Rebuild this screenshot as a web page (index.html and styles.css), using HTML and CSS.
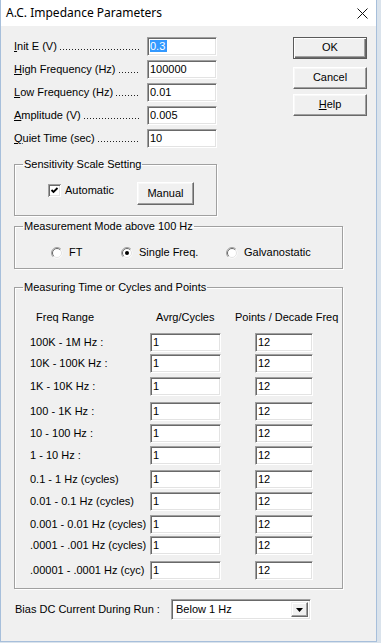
FILE: index.html
```html
<!DOCTYPE html>
<html>
<head>
<meta charset="utf-8">
<title>A.C. Impedance Parameters</title>
<link rel="stylesheet" href="styles.css">
</head>
<body>
<div class="window">
  <div class="titlebar">
    <span class="title">A.C. Impedance Parameters</span>
    <svg class="close" width="11" height="11" viewBox="0 0 11 11"><path d="M0.5 0.5 L10.5 10.5 M10.5 0.5 L0.5 10.5" stroke="#111" stroke-width="1" fill="none"/></svg>
  </div>
  <div class="client">
    <div class="top">
      <div class="params">
        <div class="param"><span class="plabel"><u>I</u>nit E (V)</span><span class="leader"></span><div class="edit"><span class="sel">0.3</span></div></div>
        <div class="param"><span class="plabel"><u>H</u>igh Frequency (Hz)</span><span class="leader"></span><div class="edit">100000</div></div>
        <div class="param"><span class="plabel"><u>L</u>ow Frequency (Hz)</span><span class="leader"></span><div class="edit">0.01</div></div>
        <div class="param"><span class="plabel"><u>A</u>mplitude (V)</span><span class="leader"></span><div class="edit">0.005</div></div>
        <div class="param"><span class="plabel"><u>Q</u>uiet Time (sec)</span><span class="leader"></span><div class="edit">10</div></div>
      </div>
      <div class="buttons">
        <div class="btn btn-default">OK</div>
        <div class="btn">Cancel</div>
        <div class="btn"><u>H</u>elp</div>
      </div>
    </div>

    <fieldset class="group group-sens">
      <legend>Sensitivity Scale Setting</legend>
      <div class="sens-row">
        <div class="check">
          <svg class="checkbox" width="13" height="13" viewBox="0 0 13 13">
            <rect x="0" y="0" width="13" height="13" fill="#a0a0a0"/>
            <rect x="1" y="1" width="12" height="12" fill="#fff"/>
            <rect x="1" y="1" width="11" height="11" fill="#696969"/>
            <rect x="2" y="2" width="10" height="10" fill="#e3e3e3"/>
            <rect x="2" y="2" width="9" height="9" fill="#fff"/>
            <path d="M3.5 6 L5.5 8 L9.5 4" stroke="#000" stroke-width="1.8" fill="none"/>
          </svg>
          <span class="check-text">Automatic</span>
        </div>
        <div class="btn btn-manual">Manual</div>
      </div>
    </fieldset>

    <fieldset class="group group-mode">
      <legend>Measurement Mode above 100 Hz</legend>
      <div class="radio-row">
        <div class="radio radio-ft">
          <svg width="12" height="12" viewBox="0 0 12 12">
            <circle cx="6" cy="6" r="5.5" fill="#fff"/>
            <path d="M2.1 9.9 A5.5 5.5 0 0 1 9.9 2.1" stroke="#a0a0a0" fill="none"/>
            <path d="M2.8 9.2 A4.5 4.5 0 0 1 9.2 2.8" stroke="#696969" fill="none"/>
            <path d="M9.2 2.8 A4.5 4.5 0 0 1 2.8 9.2" stroke="#e3e3e3" fill="none"/>
          </svg>
          <span>FT</span>
        </div>
        <div class="radio radio-single">
          <svg width="12" height="12" viewBox="0 0 12 12">
            <circle cx="6" cy="6" r="5.5" fill="#fff"/>
            <path d="M2.1 9.9 A5.5 5.5 0 0 1 9.9 2.1" stroke="#a0a0a0" fill="none"/>
            <path d="M2.8 9.2 A4.5 4.5 0 0 1 9.2 2.8" stroke="#696969" fill="none"/>
            <path d="M9.2 2.8 A4.5 4.5 0 0 1 2.8 9.2" stroke="#e3e3e3" fill="none"/>
            <circle cx="6" cy="6" r="2" fill="#000"/>
          </svg>
          <span>Single Freq.</span>
        </div>
        <div class="radio">
          <svg width="12" height="12" viewBox="0 0 12 12">
            <circle cx="6" cy="6" r="5.5" fill="#fff"/>
            <path d="M2.1 9.9 A5.5 5.5 0 0 1 9.9 2.1" stroke="#a0a0a0" fill="none"/>
            <path d="M2.8 9.2 A4.5 4.5 0 0 1 9.2 2.8" stroke="#696969" fill="none"/>
            <path d="M9.2 2.8 A4.5 4.5 0 0 1 2.8 9.2" stroke="#e3e3e3" fill="none"/>
          </svg>
          <span>Galvanostatic</span>
        </div>
      </div>
    </fieldset>

    <fieldset class="group group-time">
      <legend>Measuring Time or Cycles and Points</legend>
      <div class="time-head">
        <span class="h-range">Freq Range</span>
        <span class="h-avg">Avrg/Cycles</span>
        <span class="h-pts">Points / Decade Freq</span>
      </div>
      <div class="trow mt9"><span class="tlabel">100K - 1M Hz :</span><div class="edit e-avg">1</div><div class="edit e-pts">12</div></div>
      <div class="trow mt2"><span class="tlabel">10K - 100K Hz :</span><div class="edit e-avg">1</div><div class="edit e-pts">12</div></div>
      <div class="trow mt4"><span class="tlabel">1K - 10K Hz :</span><div class="edit e-avg">1</div><div class="edit e-pts">12</div></div>
      <div class="trow mt6"><span class="tlabel">100 - 1K Hz :</span><div class="edit e-avg">1</div><div class="edit e-pts">12</div></div>
      <div class="trow mt3"><span class="tlabel">10 - 100 Hz :</span><div class="edit e-avg">1</div><div class="edit e-pts">12</div></div>
      <div class="trow mt3"><span class="tlabel">1 - 10 Hz :</span><div class="edit e-avg">1</div><div class="edit e-pts">12</div></div>
      <div class="trow mt5"><span class="tlabel">0.1 - 1 Hz (cycles)</span><div class="edit e-avg">1</div><div class="edit e-pts">12</div></div>
      <div class="trow mt3"><span class="tlabel">0.01 - 0.1 Hz (cycles)</span><div class="edit e-avg">1</div><div class="edit e-pts">12</div></div>
      <div class="trow mt4"><span class="tlabel">0.001 - 0.01 Hz (cycles)</span><div class="edit e-avg">1</div><div class="edit e-pts">12</div></div>
      <div class="trow mt2"><span class="tlabel">.0001 - .001 Hz (cycles)</span><div class="edit e-avg">1</div><div class="edit e-pts">12</div></div>
      <div class="trow mt6"><span class="tlabel">.00001 - .0001 Hz (cyc)</span><div class="edit e-avg">1</div><div class="edit e-pts">12</div></div>
    </fieldset>

    <div class="bias">
      <span class="bias-label">Bias DC Current During Run :</span>
      <div class="combo">
        <span class="combo-text">Below 1 Hz</span>
        <div class="combo-btn">
          <svg width="7" height="4" viewBox="0 0 7 4"><path d="M0 0 H7 L3.5 4 Z" fill="#000"/></svg>
        </div>
      </div>
    </div>
  </div>
</div>
</body>
</html>
```

FILE: styles.css
```css
html, body {
  margin: 0;
  padding: 0;
}

body {
  background: #dae3ec;
  font-family: "Liberation Sans", Arial, sans-serif;
  font-size: 11px;
  color: #000;
  line-height: 13px;
}

.window {
  width: 377px;
  height: 642px;
  box-sizing: border-box;
  border: 1px solid #a7bfdb;
  border-top: 0;
  background: #f0f0f0;
  display: flex;
  flex-direction: column;
}

.titlebar {
  flex: none;
  height: 26px;
  background: #fff;
  display: flex;
  align-items: center;
  justify-content: space-between;
  padding: 0 8px 0 5px;
}

.title {
  font-family: "Noto Sans", "Open Sans", sans-serif;
  font-size: 12px;
  line-height: 16px;
  color: #000;
}

.close {
  display: block;
  margin-top: 1px;
}

.client {
  padding: 11px 0 0 13px;
}

.top {
  display: flex;
}

.params {
  width: 203px;
  display: flex;
  flex-direction: column;
  gap: 4px;
}

.param {
  display: flex;
  align-items: center;
  height: 19px;
}

.plabel {
  white-space: nowrap;
  flex: none;
}

.leader {
  flex: 1;
  align-self: stretch;
  margin: 0 7px 0 3px;
  background-image: linear-gradient(to right, #222 1px, transparent 1px);
  background-size: 3px 1px;
  background-repeat: repeat-x;
  background-position: 0 12px;
}

.edit {
  box-sizing: border-box;
  height: 19px;
  width: 70px;
  flex: none;
  background: #fff;
  border: 1px solid;
  border-color: #a0a0a0 #fff #fff #a0a0a0;
  box-shadow: inset 1px 1px 0 #696969, inset -1px -1px 0 #e3e3e3;
  padding: 2px 0 0 2px;
  line-height: 13px;
  white-space: nowrap;
}

.sel {
  background: #3399ff;
  color: #fff;
  padding-right: 2px;
}

.buttons {
  margin-left: 76px;
  width: 74px;
  display: flex;
  flex-direction: column;
  gap: 5px;
}

.btn {
  box-sizing: border-box;
  height: 22px;
  border: 1px solid;
  border-color: #fff #696969 #696969 #fff;
  box-shadow: inset -1px -1px 0 #a0a0a0, inset 1px 1px 0 #f8f8f8;
  background: #f0f0f0;
  display: flex;
  align-items: center;
  justify-content: center;
  padding-bottom: 1px;
}

.btn-default {
  border-color: #5a5a5a;
  box-shadow: inset 1px 1px 0 #fff, inset -1px -1px 0 #696969, inset -2px -2px 0 #a0a0a0;
  margin-bottom: 3px;
}

.group {
  margin: 0;
  padding: 0;
  min-width: 0;
  box-sizing: border-box;
  border: 1px solid #a0a0a0;
  box-shadow: inset 1px 1px 0 #fff, 1px 1px 0 #fff;
}

.group legend {
  margin-left: 8px;
  padding: 0 1px;
  line-height: 13px;
}

.group-sens {
  width: 203px;
  margin-top: 10px;
}

.sens-row {
  display: flex;
  align-items: flex-start;
  padding: 11px 0 10px 33px;
}

.check {
  width: 89px;
  display: flex;
  align-items: center;
  margin-top: 2px;
}

.checkbox {
  display: block;
  flex: none;
}

.check-text {
  margin-left: 4px;
  margin-top: -1px;
}

.btn-manual {
  width: 57px;
  height: 23px;
}

.group-mode {
  width: 329px;
  margin-top: 4px;
}

.radio-row {
  display: flex;
  padding: 13px 0 9px 36px;
}

.radio {
  display: flex;
  align-items: center;
  height: 13px;
  gap: 6px;
}

.radio svg {
  display: block;
  flex: none;
}

.radio-ft {
  width: 70px;
}

.radio-single {
  width: 105px;
}

.group-time {
  width: 329px;
  margin-top: 12px;
  padding-bottom: 8px;
}

.time-head {
  display: flex;
  padding: 17px 0 0 21px;
  white-space: nowrap;
}

.h-range {
  width: 120px;
}

.h-avg {
  width: 79px;
}

.trow {
  display: grid;
  grid-template-columns: 120px 105px 58px;
  align-items: center;
  padding-left: 15px;
  height: 19px;
}

.tlabel {
  white-space: nowrap;
}

.e-avg {
  width: 71px;
}

.e-pts {
  width: 58px;
}

.mt2 { margin-top: 2px; }
.mt3 { margin-top: 3px; }
.mt4 { margin-top: 4px; }
.mt5 { margin-top: 5px; }
.mt6 { margin-top: 6px; }
.mt9 { margin-top: 9px; }

.bias {
  display: flex;
  align-items: center;
  margin-top: 10px;
  padding-left: 1px;
}

.bias-label {
  width: 156px;
  white-space: nowrap;
}

.combo {
  box-sizing: border-box;
  width: 140px;
  height: 21px;
  background: #fff;
  border: 1px solid;
  border-color: #a0a0a0 #fff #fff #a0a0a0;
  box-shadow: inset 1px 1px 0 #696969, inset -1px -1px 0 #e3e3e3;
  display: flex;
  align-items: center;
  justify-content: space-between;
  padding: 2px 2px 2px 4px;
}

.combo-btn {
  box-sizing: border-box;
  width: 17px;
  height: 15px;
  border: 1px solid;
  border-color: #f0f0f0 #696969 #696969 #f0f0f0;
  box-shadow: inset -1px -1px 0 #a0a0a0, inset 1px 1px 0 #fff;
  background: #f0f0f0;
  display: flex;
  align-items: center;
  justify-content: center;
}

.combo-btn svg {
  display: block;
}
```
